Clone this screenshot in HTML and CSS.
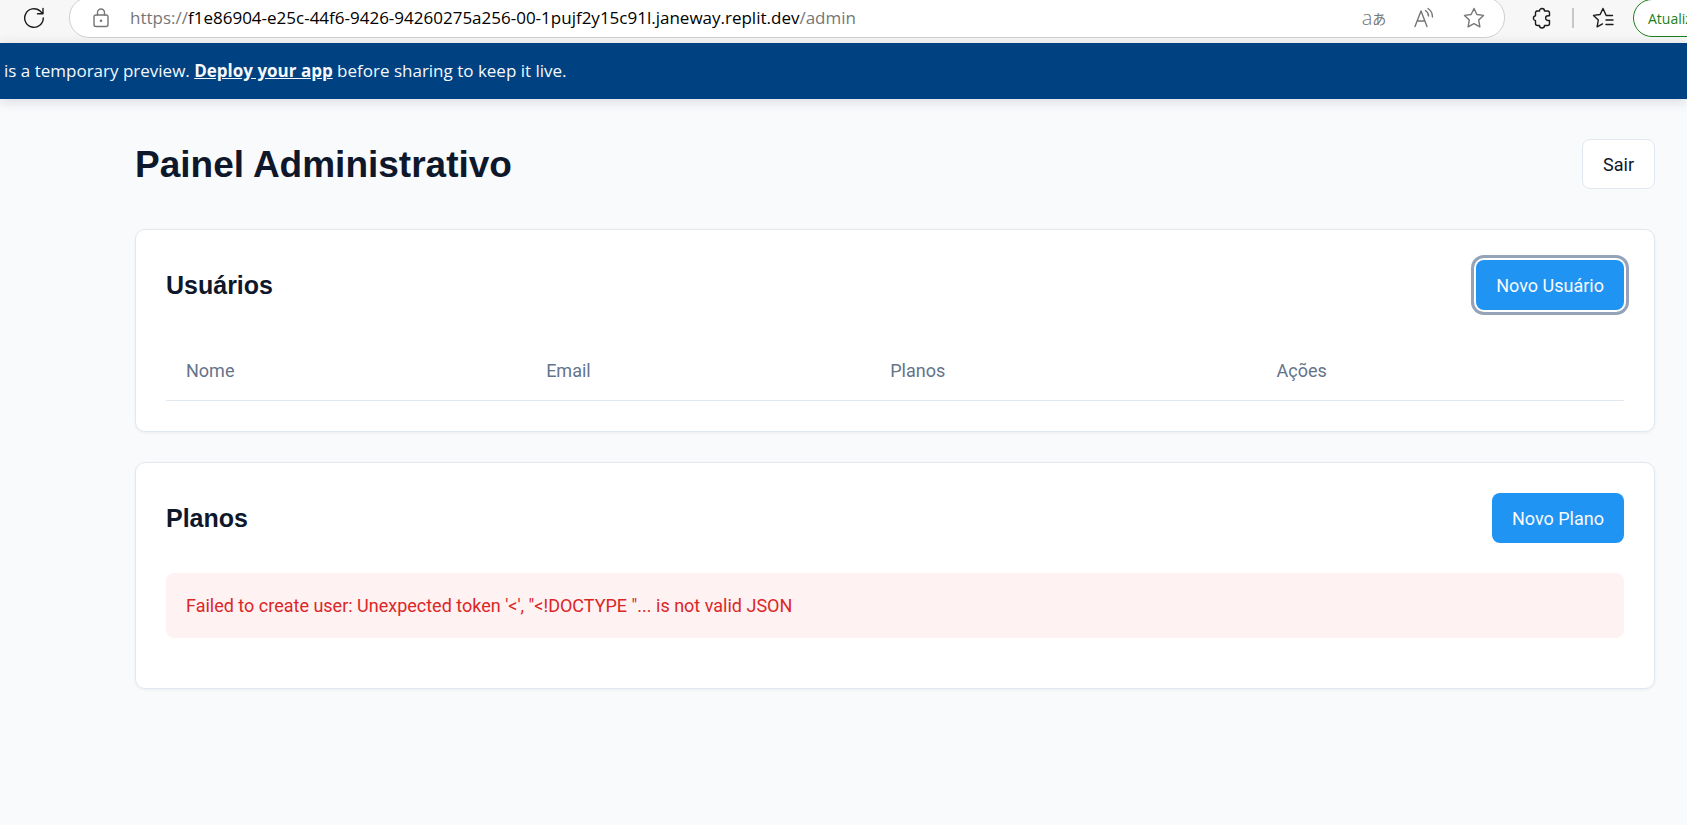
FILE: index.html
```html
<!DOCTYPE html>
<html lang="pt-BR">
<head>
<meta charset="utf-8">
<title>Painel Administrativo</title>
<link rel="stylesheet" href="styles.css">
</head>
<body>
<div class="toolbar">
  <button class="icon-btn reload" aria-label="Atualizar página">
    <svg width="22" height="22" viewBox="0 0 22 22"><path d="M20.300 11A9.300 9.300 0 1 1 17 3.900L19.800 6.500M20 1.500V6.800H14.500"/></svg>
  </button>
  <div class="address">
    <svg class="lock" width="18" height="20" viewBox="0 0 18 20"><rect x="2" y="7" width="14" height="11.500" rx="2"/><path d="M5.500 7V4.500a3.500 3.500 0 0 1 7 0V7"/><circle class="dot" cx="9" cy="12.700" r="1.300"/></svg>
    <div class="url">https://<span class="host">f1e86904-e25c-44f6-9426-94260275a256-00-1pujf2y15c91l.janeway.replit.dev</span>/admin</div>
    <div class="tools">
      <button class="icon-btn translate" aria-label="Traduzir"><span>a</span><span class="kana" lang="ja">あ</span></button>
      <button class="icon-btn" aria-label="Ler em voz alta">
        <svg width="22" height="22" viewBox="0 0 22 22"><path d="M2 19.500L8 4L14 19.500M4 14H12M12.500 3.500Q15.500 5.500 15.500 9M15 1.500Q19.500 4.500 19.500 10"/></svg>
      </button>
      <button class="icon-btn" aria-label="Adicionar aos favoritos">
        <svg width="22" height="22" viewBox="0 0 22 22"><path d="M11 1.500L13.900 7.500L20.500 8.400L15.700 13L16.900 19.800L11 16.600L5.100 19.800L6.300 13L1.500 8.400L8.100 7.500Z"/></svg>
      </button>
    </div>
  </div>
  <button class="icon-btn dark" aria-label="Extensões">
    <svg width="22" height="22" viewBox="0 0 22 22"><path d="M5.500 4H8.500A2.500 2.500 0 0 1 13.500 4H16.500Q18.500 4 18.500 6V8.700H17A2.400 2.400 0 0 0 17 13.500H18.500V16.500Q18.500 18.500 16.500 18.500H13.500A2.500 2.500 0 0 1 8.500 18.500H6.500Q4.500 18.500 4.500 16.500V13.800A2.600 2.600 0 0 1 4.500 8.700V6Q4.500 4 6.500 4"/></svg>
  </button>
  <span class="divider"></span>
  <button class="icon-btn dark" aria-label="Favoritos">
    <svg width="22" height="22" viewBox="0 0 22 22"><path d="M20.500 8.500H14.200L11 1.500L8.100 7.500L1.500 8.400L6.300 13L5.100 19.800L10.500 16.900M14 13H21M14 17.500H21"/></svg>
  </button>
  <div class="update-slot"><button class="update">Atualizar</button></div>
</div>
<div class="banner">is a temporary preview. <a href="#">Deploy your app</a> before sharing to keep it live.</div>
<main class="page">
  <header class="page-head">
    <h1>Painel Administrativo</h1>
    <button class="btn outline">Sair</button>
  </header>
  <section class="card">
    <div class="card-head">
      <h2>Usuários</h2>
      <button class="btn primary focused">Novo Usuário</button>
    </div>
    <table class="users">
      <thead><tr><th class="c-name">Nome</th><th class="c-email">Email</th><th class="c-plans">Planos</th><th class="c-actions">Ações</th></tr></thead>
    </table>
  </section>
  <section class="card">
    <div class="card-head">
      <h2>Planos</h2>
      <button class="btn primary">Novo Plano</button>
    </div>
    <div class="alert" role="alert">Failed to create user: Unexpected token '&lt;', "&lt;!DOCTYPE "... is not valid JSON</div>
  </section>
</main>
</body>
</html>
```
FILE: styles.css
```css
* { box-sizing: border-box; }
body {
  margin: 0;
  min-height: 100vh;
  background: #f9fafc;
  color: #0f172a;
  font: 18px/25px Roboto, sans-serif;
}
button { font: inherit; cursor: pointer; }
svg { display: block; fill: none; stroke: currentColor; stroke-width: 1.4; stroke-linecap: round; stroke-linejoin: round; }

.toolbar {
  display: flex;
  align-items: flex-start;
  height: 43px;
  padding-left: 23px;
  overflow: hidden;
  background: #f7f7f7;
  font-family: "Open Sans", sans-serif;
}
.icon-btn {
  display: flex;
  align-items: center;
  justify-content: center;
  flex: none;
  width: 22px;
  height: 36px;
  padding: 0;
  border: 0;
  background: none;
  color: #767676;
}
.reload, .dark { color: #1b1b1b; }
.address {
  display: flex;
  align-items: center;
  flex: 1;
  height: 41px;
  margin: -3px 26px 0 24px;
  padding: 0 19px 0 22px;
  border: 1px solid #cfcfcf;
  border-radius: 20px;
  background: #fff;
}
.lock { flex: none; margin-right: 20px; }
.lock, .url { color: #767676; }
.dot { fill: currentColor; stroke: none; }
.url { flex: 1; font-size: 17px; white-space: nowrap; }
.host { color: #000; }
.tools { display: flex; gap: 28px; }
.translate { font-size: 20px; font-weight: 300; }
.kana { font: 14px "Noto Sans CJK JP", sans-serif; }
.divider { width: 2px; height: 20px; margin: 8px 18px 0 19px; background: #c8c8c8; }
.update-slot { flex: none; width: 54px; margin-left: 19px; }
.update {
  width: 104px;
  height: 38px;
  margin-top: -1px;
  padding: 0 14px;
  border: 1px solid #1a7f1a;
  border-radius: 19px;
  background: #fff;
  color: #1a7f1a;
  font-size: 14px;
  text-align: left;
}

.banner {
  padding: 15px 4px 16px;
  background: #004182;
  box-shadow: 0 2px 12px rgba(15, 23, 42, 0.15);
  color: #f5f9fc;
  font: 17px/25px "Open Sans", sans-serif;
}
.banner a { color: inherit; font-weight: 700; }

.page { padding: 40px 32px 40px 135px; }
.page-head, .card-head { display: flex; align-items: center; justify-content: space-between; }
.page-head { margin-bottom: 40px; }
h1, h2 { margin: 0; font-family: "Liberation Sans", Arial, sans-serif; font-weight: 700; }
h1 { font-size: 37px; line-height: 45px; }
h2 { font-size: 25px; line-height: 35px; }
.btn { height: 50px; padding: 0 20px; border: 0; border-radius: 8px; }
.outline { border: 1px solid #e2e8f0; background: #fff; color: #0f172a; }
.primary { background: #2094f3; color: #f8fafc; }
.focused { box-shadow: 0 0 0 2px #fff, 0 0 0 5px #94a3b8; }
.card {
  margin-bottom: 30px;
  padding: 30px;
  border: 1px solid #e2e8f0;
  border-radius: 10px;
  background: #fff;
  box-shadow: 0 1px 3px rgba(15, 23, 42, 0.06);
}
.card-head { margin-bottom: 30px; }
.users { width: 100%; border-collapse: separate; border-spacing: 0; table-layout: fixed; }
.users th {
  height: 61px;
  padding: 0 20px;
  border-bottom: 1px solid #e2e8f0;
  color: #64748b;
  font-weight: 400;
  text-align: left;
}
.c-name { width: 24.7%; }
.c-email { width: 23.6%; }
.c-plans { width: 26.5%; }
.c-actions { width: 25.2%; }
.alert { margin-bottom: 20px; padding: 20px; border-radius: 8px; background: #fef2f2; color: #dc2626; }
```
